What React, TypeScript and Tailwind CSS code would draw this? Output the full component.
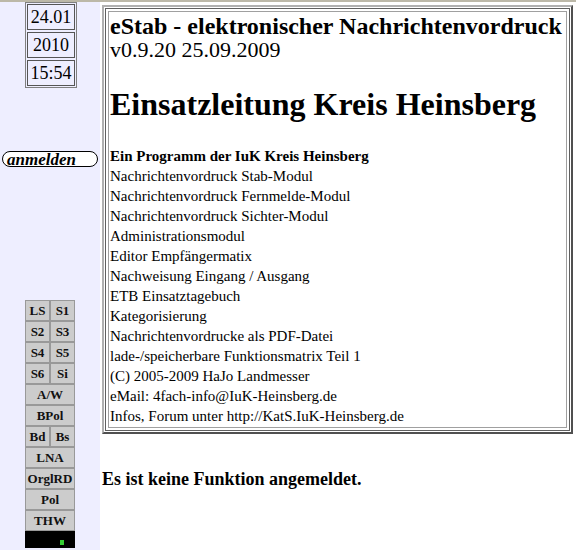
import React from "react";

const serif = { fontFamily: '"Liberation Serif", "Times New Roman", serif' };

const lines = [
	"Nachrichtenvordruck Stab-Modul",
	"Nachrichtenvordruck Fernmelde-Modul",
	"Nachrichtenvordruck Sichter-Modul",
	"Administrationsmodul",
	"Editor Empfängermatix",
	"Nachweisung Eingang / Ausgang",
	"ETB Einsatztagebuch",
	"Kategorisierung",
	"Nachrichtenvordrucke als PDF-Datei",
	"lade-/speicherbare Funktionsmatrix Teil 1",
	"(C) 2005-2009 HaJo Landmesser",
	"eMail: 4fach-info@IuK-Heinsberg.de",
	"Infos, Forum unter http://KatS.IuK-Heinsberg.de",
];

const rows: string[][] = [
	["LS", "S1"],
	["S2", "S3"],
	["S4", "S5"],
	["S6", "Si"],
	["A/W"],
	["BPol"],
	["Bd", "Bs"],
	["LNA"],
	["OrglRD"],
	["Pol"],
	["THW"],
];

const Cell: React.FC<{ label: string }> = ({ label }) => (
	<div className="flex-1 h-[21px] flex items-center justify-center bg-[#cccccc] border border-[#999999] text-[13px] font-bold text-[#111111]">
		{label}
	</div>
);

export default function App() {
	return (
		<div className="w-[576px] h-[550px] overflow-hidden bg-white" style={serif}>
			<div className="h-[2px] bg-[#bcb8a8]" />
			<div className="flex h-[548px]">
				{/* Sidebar */}
				<div className="w-[100px] bg-[#eeeeff] flex flex-col">
					<div className="ml-[25px] w-[52px] border border-[#808080] p-[1px] flex flex-col gap-[2px]">
						{["24.01", "2010", "15:54"].map((d) => (
							<div
								key={d}
								className="h-[26px] border border-[#555555] flex items-center justify-center text-[18px] text-black"
							>
								{d}
							</div>
						))}
					</div>
					<div className="mt-[63px] ml-[2px] w-[96px] h-[16px] rounded-full border border-black bg-white flex items-center pl-[4px] text-[17px] leading-none font-bold italic text-black">
						anmelden
					</div>
					<div className="mt-[133px] ml-[25px] w-[50px] flex flex-col">
						{rows.map((r, i) => (
							<div key={i} className="flex">
								{r.map((l) => (
									<Cell key={l} label={l} />
								))}
							</div>
						))}
						<div className="h-[17px] bg-black relative">
							<div className="absolute left-[35px] top-[9px] w-[4px] h-[5px] bg-[#33cc33]" />
						</div>
					</div>
				</div>

				{/* Main */}
				<div className="flex-1 pl-[2px] pt-[3px]">
					<div className="w-[471px] border-2 border-t-[#b0b0b0] border-l-[#b0b0b0] border-r-[#505050] border-b-[#505050] p-[1px]">
						<div className="border border-[#606060] p-[2px]">
							<div className="border border-[#a0a0a0] pl-[1px] pr-[2px] pt-[2px] pb-[1px] text-black">
								<div className="text-[24px] font-bold leading-[24px] whitespace-nowrap">
									eStab - elektronischer Nachrichtenvordruck
								</div>
								<div className="text-[22px] leading-[24px]">v0.9.20 25.09.2009</div>
								<div className="mt-[22px] text-[32px] font-bold leading-[40px]">
									Einsatzleitung Kreis Heinsberg
								</div>
								<div className="mt-[22px] text-[15px] leading-[20px]">
									<div className="font-bold">Ein Programm der IuK Kreis Heinsberg</div>
									{lines.map((l) => (
										<div key={l}>{l}</div>
									))}
								</div>
							</div>
						</div>
					</div>
					<div className="mt-[32px] text-[18px] font-bold text-black">
						Es ist keine Funktion angemeldet.
					</div>
				</div>
			</div>
		</div>
	);
}
